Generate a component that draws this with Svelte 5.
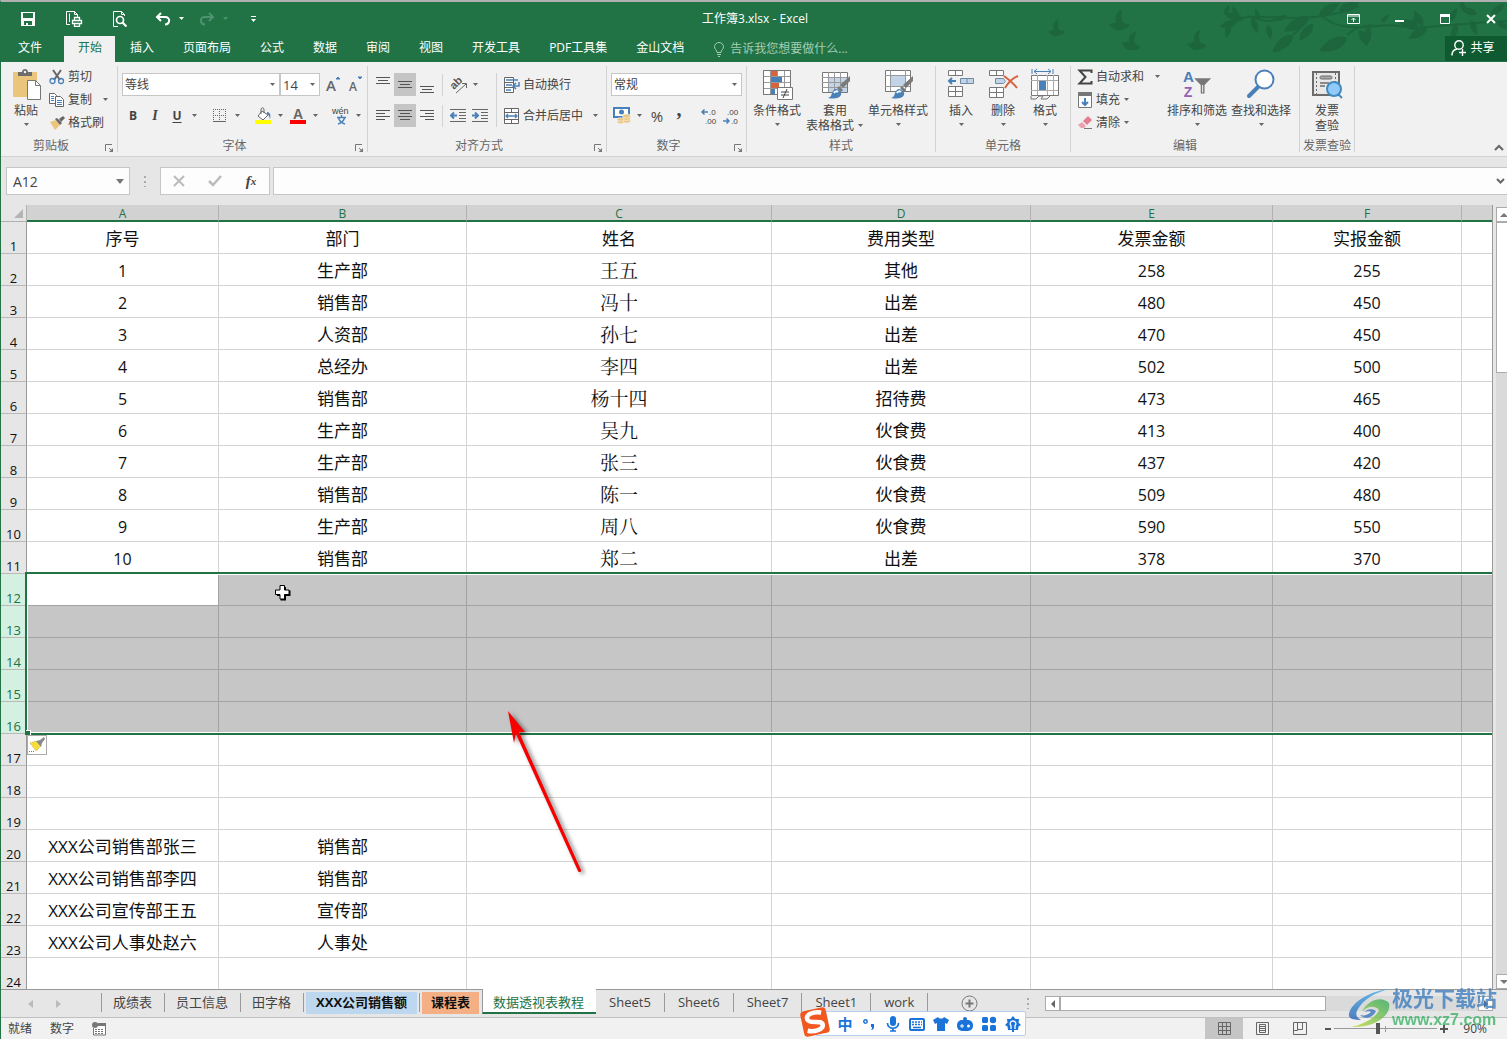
<script lang="ts">
  const tabs = ["插入", "页面布局", "公式", "数据", "审阅", "视图", "开发工具", "PDF工具集", "金山文档"];

  const columns = ["A", "B", "C", "D", "E", "F", ""];

  const data: Record<number, string[]> = {
    1: ["序号", "部门", "姓名", "费用类型", "发票金额", "实报金额"],
    2: ["1", "生产部", "王五", "其他", "258", "255"],
    3: ["2", "销售部", "冯十", "出差", "480", "450"],
    4: ["3", "人资部", "孙七", "出差", "470", "450"],
    5: ["4", "总经办", "李四", "出差", "502", "500"],
    6: ["5", "销售部", "杨十四", "招待费", "473", "465"],
    7: ["6", "生产部", "吴九", "伙食费", "413", "400"],
    8: ["7", "生产部", "张三", "伙食费", "437", "420"],
    9: ["8", "销售部", "陈一", "伙食费", "509", "480"],
    10: ["9", "生产部", "周八", "伙食费", "590", "550"],
    11: ["10", "销售部", "郑二", "出差", "378", "370"],
    20: ["XXX公司销售部张三", "销售部"],
    21: ["XXX公司销售部李四", "销售部"],
    22: ["XXX公司宣传部王五", "宣传部"],
    23: ["XXX公司人事处赵六", "人事处"],
  };
  const rows = Array.from({ length: 24 }, (_, i) => i + 1);

  const sheets = [
    { name: "成绩表" },
    { name: "员工信息" },
    { name: "田字格" },
    { name: "XXX公司销售额", kind: "blue" },
    { name: "课程表", kind: "orange" },
    { name: "数据透视表教程", kind: "active" },
    { name: "Sheet5", kind: "latin" },
    { name: "Sheet6", kind: "latin" },
    { name: "Sheet7", kind: "latin" },
    { name: "Sheet1", kind: "latin" },
    { name: "work", kind: "latin" },
  ];

  let nameBox = $state("A12");
  let formula = $state("");
  let zoom = $state(90);

  const inSelection = (row: number) => row >= 12 && row <= 16;
  const isNumber = (value?: string) => !!value && /^\d+$/.test(value);

  // x, y, rotation, scale
  const leaves = [
    [196, 18, 200, 1.1], [192, 15, 235, 0.7], [190, 20, 165, 1.0], [178, 13, 290, 0.6], [182, 22, 100, 0.8],
    [205, 16, 70, 0.9], [212, 17, 250, 0.6], [221, 23, 80, 0.8], [262, 15, 150, 1.6], [266, 22, 130, 1.2],
    [272, 13, 330, 1.3], [292, 8, 340, 1.2], [240, 14, 160, 0.7], [246, 33, 140, 1.5], [300, 36, 155, 1.7],
    [312, 28, 60, 1.0], [322, 25, 100, 1.1], [334, 20, 320, 0.6], [372, 26, 200, 1.3], [376, 24, 240, 1.0],
    [380, 26, 150, 1.2], [366, 24, 290, 0.7], [402, 20, 300, 0.9], [410, 22, 110, 0.9], [424, 18, 70, 0.9],
    [430, 12, 200, 1.0], [444, 13, 320, 1.0], [450, 20, 30, 0.8], [418, 10, 250, 0.7],
  ];
  const birds = [
    [1, 17, 0, 0.8], [62, 7, 0, 1], [78, 26, 14, 0.95], [141, 27, 4, 0.95],
  ];
</script>

{#snippet caret()}
  <svg class="caret" width="7" height="4" viewBox="0 0 7 4"><path d="M1 0h5L3.5 3z" fill="currentColor" /></svg>
{/snippet}

{#snippet lines(list: number[][])}
  <svg width="16" height="18" viewBox="0 0 16 18" shape-rendering="crispEdges">
    {#each list as [x, y, w]}
      <rect {x} {y} width={w} height="1" fill="#555" />
    {/each}
  </svg>
{/snippet}

{#snippet launcher()}
  <button class="launcher" aria-label="更多选项">
    <svg width="9" height="9" viewBox="0 0 9 9"><path d="M.5 7V.5H7M4 4l3 3" fill="none" stroke="#777" /><path d="M8 4v4H4z" fill="#777" /></svg>
  </button>
{/snippet}

{#snippet brush()}
  <path d="M31 8v5l-7 7-3-3z" fill="#7a7a7a" />
  <path d="M20 18l4 4-2 2-4-4z" fill="#7a7a7a" />
  <path d="M17 21c3 0 6 3 5 6-2 4-8 4-13 3 3-1 3-2 4-5 1-2 2-4 4-4z" fill="#4a80b8" />
  <path d="M15 25c1-2 3-2 4-1" stroke="#fff" stroke-width="2" fill="none" />
{/snippet}

<div class="app">
  <header>
    <svg class="foliage" width="460" height="58" viewBox="0 0 460 58">
      <g fill="#1c653d">
        {#each birds as [x, y, r, s]}
          <path d="M13 0C7 3 5 9 8 13C5 14 2 15 0 16C4 19 7 23 12 21C15 20 21 19 20 15C16 15 14 14 13 12C12 8 12 4 13 0Z" transform="translate({x} {y}) rotate({r}) scale({s})" />
        {/each}
        {#each leaves as [x, y, r, s]}
          <path d="M0 0C4-5 12-4 18 0C12 4 4 5 0 0Z" transform="translate({x} {y}) rotate({r}) scale({s})" />
        {/each}
      </g>
      <path d="M188 18C210 10 240 20 275 14S300 8 312 4M276 15C300 34 330 20 352 24S400 22 460 19M300 33C308 26 316 22 330 24M200 14C215 18 224 22 232 16M262 15C258 22 252 28 246 33" fill="none" stroke="#1c653d" stroke-width="2" />
    </svg>
    <div class="titlebar">
      <div class="qat">
        <button class="wide" aria-label="保存">
          <svg width="14" height="14" viewBox="0 0 14 14"><path d="M0 0h14v14H0zM2 1v5h10V1zM3 9v4h2v-2h2v2h4V9z" fill="#fff" fill-rule="evenodd" /></svg>
        </button>
        <button class="wide" aria-label="快速打印">
          <svg width="17" height="16" viewBox="0 0 17 16" fill="none" stroke="#fff"><path d="M4 13.500H.5v-13h8l3 3V6M3.500 2.500V11M8.500.5v3h3" /><path d="M6.500 12.500v-3h9v3zM8.500 9V6.500h5V9M8.500 12.500v3h5v-3" stroke-width="1.300" /></svg>
        </button>
        <button class="wide" aria-label="打印预览">
          <svg width="14" height="16" viewBox="0 0 14 16" fill="none" stroke="#fff"><path d="M5 15.500H.5V.5h8l3 3V5M8.500.5v3h3" /><circle cx="7" cy="9" r="3.500" stroke-width="1.700" /><path d="M9.500 11.500l4 4" stroke-width="2.200" /></svg>
        </button>
        <button class="undo" aria-label="撤消">
          <svg width="16" height="14" viewBox="0 0 16 14" fill="none" stroke="#fff" stroke-width="2"><path d="M2 5h8c6 0 5 7 0 7.500" /><path d="M6 1L2 5l4 4" /></svg>
        </button>
        <button class="drop" aria-label="撤消列表">{@render caret()}</button>
        <button class="redo dim" aria-label="恢复">
          <svg width="16" height="14" viewBox="0 0 16 14" fill="none" stroke="currentColor" stroke-width="2"><path d="M14 5H6c-6 0-5 7 0 7.500" /><path d="M10 1l4 4-4 4" /></svg>
        </button>
        <button class="drop dim" aria-label="恢复列表">{@render caret()}</button>
        <button class="more" aria-label="自定义快速访问工具栏">
          <svg width="7" height="7" viewBox="0 0 7 7"><path d="M1 0h5v1H1zM1 3h5L3.500 6z" fill="#fff" /></svg>
        </button>
      </div>
      <h1>工作簿3.xlsx - Excel</h1>
      <div class="window-controls">
        <button aria-label="功能区显示选项">
          <svg width="13" height="10" viewBox="0 0 13 10" fill="none" stroke="#fff"><path d="M.5.5h12v9H.5zM1 2h11M6.500 8V4M4.500 6l2-2 2 2" /></svg>
        </button>
        <button aria-label="最小化"><svg width="10" height="10" viewBox="0 0 10 10"><path d="M1 6h9v2H1z" fill="#fff" /></svg></button>
        <button aria-label="最大化"><svg width="10" height="10" viewBox="0 0 10 10"><path d="M.5 1.500h9v8h-9z" fill="none" stroke="#fff" /><path d="M0 0h10v3H0z" fill="#fff" /></svg></button>
        <button aria-label="关闭"><svg width="10" height="10" viewBox="0 0 10 10"><path d="M1 1l8 8M9 1L1 9" stroke="#fff" stroke-width="2" /></svg></button>
      </div>
    </div>
    <nav class="tabs">
      <button class="tab file">文件</button>
      <button class="tab current">开始</button>
      {#each tabs as tab}
        <button class="tab">{tab}</button>
      {/each}
      <button class="tell-me">
        <svg width="12" height="15" viewBox="0 0 12 15" fill="none" stroke="#a3cdb3"><path d="M4 10.500C4 8 1.500 7.500 1.500 4.800A4.500 4.300 0 0 1 10.500 4.800C10.500 7.500 8 8 8 10.500zM4 12.500h4M5 14.500h2" /></svg>
        告诉我您想要做什么...
      </button>
      <button class="share">
        <svg width="16" height="16" viewBox="0 0 16 16" fill="none" stroke="#fff" stroke-width="1.400"><circle cx="8" cy="5" r="4.200" /><path d="M1 15.500c0-4 2-6 5-6.500M8 12.500h7M11.500 9v7" /></svg>
        共享
      </button>
    </nav>
  </header>

  <section class="ribbon">
    <div class="group clipboard">
      <div class="body">
        <button class="big">
          <svg width="32" height="32" viewBox="0 0 32 32"><path d="M3 4h24v25H3z" fill="#ecc57c" /><path d="M8 8V4h4c0-4 6-4 6 0h4v4z" fill="#6d6d6d" /><circle cx="15" cy="4" r="1.200" fill="#f1f1f1" /><path d="M17.500 12.500h8l5 5v14h-13z" fill="#fff" stroke="#777" /><path d="M25.500 12.500v5h5" fill="none" stroke="#777" /></svg>
          <span>粘贴</span>
          {@render caret()}
        </button>
        <div class="stack">
          <button class="small">
            <svg width="16" height="16" viewBox="0 0 16 16" fill="none"><path d="M4 1l7 10M12 1L5 11" stroke="#666" stroke-width="2" /><circle cx="3.500" cy="12" r="2.500" stroke="#4a80b8" stroke-width="1.300" /><circle cx="12" cy="12" r="2.500" stroke="#4a80b8" stroke-width="1.300" /></svg>
            剪切
          </button>
          <button class="small">
            <svg width="16" height="16" viewBox="0 0 16 16"><path d="M.5 1.500h5l2 2v8h-7z" fill="#fff" stroke="#666" /><path d="M6.500 4.500h5l3 3v7h-8z" fill="#fff" stroke="#666" /><path d="M2 4.500h3M2 6.500h3M2 8.500h3M8 8.500h5M8 10.500h5M8 12.500h5" stroke="#4a80b8" /></svg>
            复制
            <span class="push">{@render caret()}</span>
          </button>
          <button class="small">
            <svg width="16" height="16" viewBox="0 0 16 16"><path d="M1 7l6-2 4 5-5 5z" fill="#ecc57c" /><path d="M6 4l5 6 2-2-5-5z" fill="#666" /><path d="M10 4l4-3 2 2-4 4z" fill="#666" /></svg>
            格式刷
          </button>
        </div>
      </div>
      <div class="caption"><span>剪贴板</span>{@render launcher()}</div>
    </div>

    <div class="group font">
      <div class="body rows">
        <div class="row">
          <span class="combo family">
            <select aria-label="字体"><option>等线</option></select>
            {@render caret()}
          </span>
          <span class="combo size">
            <select aria-label="字号"><option>14</option></select>
            {@render caret()}
          </span>
          <button class="tool w24" aria-label="增大字号"><svg width="18" height="20" viewBox="0 0 18 20"><text x="2" y="16" font-size="15" font-weight="600" fill="#666">A</text><path d="M12 4l2-2 2 2z" fill="#4a80b8" stroke="#4a80b8" /></svg></button>
          <button class="tool" aria-label="减小字号"><svg width="18" height="20" viewBox="0 0 18 20"><text x="2" y="16" font-size="12" font-weight="600" fill="#666">A</text><path d="M11 2l2 2 2-2z" fill="#4a80b8" stroke="#4a80b8" /></svg></button>
        </div>
        <div class="row">
          <button class="tool bold">B</button>
          <button class="tool italic">I</button>
          <button class="tool under">U</button>
          <button class="arrow" aria-label="下划线样式">{@render caret()}</button>
          <i class="sep"></i>
          <button class="tool" aria-label="边框"><svg width="14" height="14" viewBox="0 0 14 14" fill="none" stroke="#666"><path d="M0 .5h13M0 6.500h13M.5 0v13M6.500 0v13M12.500 0v13" stroke-dasharray="1 1" /><path d="M0 12.500h13" /></svg></button>
          <button class="arrow" aria-label="边框样式">{@render caret()}</button>
          <i class="sep"></i>
          <button class="tool" aria-label="填充颜色"><svg width="16" height="18" viewBox="0 0 16 18"><path d="M7 4l6 4-5 5-5-4z" fill="#fff" stroke="#666" /><path d="M6 7V3c0-3 3-3 3 0v3" fill="none" stroke="#666" /><path d="M12 5c3 0 4 3 3 7-1-3-1-4-3-5z" fill="#4a80b8" /><path d="M0 13h16v4H0z" fill="#ff0" /></svg></button>
          <button class="arrow" aria-label="更多填充颜色">{@render caret()}</button>
          <button class="tool" aria-label="字体颜色"><svg width="16" height="22" viewBox="0 -2 16 22"><text class="glyph" x="3" y="12" font-size="14" font-weight="700" fill="#666">A</text><path d="M0 13h16v4H0z" fill="red" /></svg></button>
          <button class="arrow" aria-label="更多字体颜色">{@render caret()}</button>
          <i class="sep"></i>
          <button class="tool" aria-label="拼音指南"><svg width="20" height="22" viewBox="0 0 20 22"><text class="glyph" x="1" y="9" font-size="9" fill="#444">wén</text><path d="M6 12.500h9M10.500 10v2M7.500 13c1 3 3 5 6.500 6M13.500 13c-1 3-3 5-6.500 6" fill="none" stroke="#4a80b8" stroke-width="1.500" /></svg></button>
          <button class="arrow" aria-label="拼音选项">{@render caret()}</button>
        </div>
      </div>
      <div class="caption"><span>字体</span>{@render launcher()}</div>
    </div>

    <div class="group align">
      <div class="body">
        <div class="rows">
          <div class="row">
            <button class="tool" aria-label="顶端对齐">{@render lines([[1, 1, 14], [3, 4, 10], [1, 7, 14]])}</button>
            <button class="tool on" aria-label="垂直居中">{@render lines([[1, 5, 14], [3, 8, 10], [1, 11, 14]])}</button>
            <button class="tool" aria-label="底端对齐">{@render lines([[1, 10, 14], [3, 13, 10], [1, 16, 14]])}</button>
            <i class="sep tight"></i>
            <button class="tool" aria-label="方向"><svg width="20" height="20" viewBox="0 0 20 20"><text class="glyph" font-size="11" font-weight="700" fill="#555" transform="translate(6 15) rotate(-45)">ab</text><path d="M8 18L18 9M14 8.500h4.500V13" fill="none" stroke="#666" /></svg></button>
            <button class="arrow" aria-label="方向选项">{@render caret()}</button>
          </div>
          <div class="row">
            <button class="tool" aria-label="左对齐">{@render lines([[1, 3, 14], [1, 6, 9], [1, 9, 14], [1, 12, 9]])}</button>
            <button class="tool on" aria-label="居中">{@render lines([[1, 3, 14], [3, 6, 10], [1, 9, 14], [3, 12, 10]])}</button>
            <button class="tool" aria-label="右对齐">{@render lines([[1, 3, 14], [6, 6, 9], [1, 9, 14], [6, 12, 9]])}</button>
            <i class="sep tight"></i>
            <button class="tool" aria-label="减少缩进量"><svg width="16" height="14" viewBox="0 0 16 14"><path d="M0 .5h16M9 3.500h7M9 6.500h7M9 9.500h7M0 12.500h16" stroke="#666" /><path d="M1 6.500h6M4 3.500l-3 3 3 3" fill="none" stroke="#4a80b8" stroke-width="2" /></svg></button>
            <button class="tool" aria-label="增加缩进量"><svg width="16" height="14" viewBox="0 0 16 14"><path d="M0 .5h16M9 3.500h7M9 6.500h7M9 9.500h7M0 12.500h16" stroke="#666" /><path d="M0 6.500h6M3 3.500l3 3-3 3" fill="none" stroke="#4a80b8" stroke-width="2" /></svg></button>
          </div>
        </div>
        <i class="sep tall"></i>
        <div class="rows">
          <div class="row">
            <button class="small">
              <svg width="16" height="16" viewBox="0 0 16 16"><path d="M.5.500h9v15h-9z" fill="#fff" stroke="#666" /><path d="M0 5.500h10M0 10.500h9" stroke="#666" /><path d="M2 3h12M2 8h6M2 13h5" stroke="#4a80b8" stroke-width="1.500" /><path d="M15 5v4h-5M12 6l-3 3 3 3" fill="none" stroke="#4a80b8" stroke-width="1.500" /></svg>
              自动换行
            </button>
          </div>
          <div class="row">
            <button class="small">
              <svg width="16" height="16" viewBox="0 0 16 16"><path d="M.5.500h14v15H.5z" fill="#fff" stroke="#666" /><path d="M0 4.500h15M0 11.500h15M7.500 0v4M7.500 12v4" stroke="#666" /><path d="M2 8h11M4 6L2 8l2 2M11 6l2 2-2 2" fill="none" stroke="#4a80b8" stroke-width="1.300" /></svg>
              合并后居中
            </button>
            <button class="arrow far" aria-label="合并选项">{@render caret()}</button>
          </div>
        </div>
      </div>
      <div class="caption"><span>对齐方式</span>{@render launcher()}</div>
    </div>

    <div class="group number">
      <div class="body rows">
        <div class="row">
          <span class="combo format">
            <select aria-label="数字格式"><option>常规</option></select>
            {@render caret()}
          </span>
        </div>
        <div class="row">
          <button class="tool" aria-label="会计数字格式"><svg width="18" height="17" viewBox="0 0 18 17"><path d="M1 1h15v9H1z" fill="#fff" stroke="#4a80b8" stroke-width="2" /><circle cx="8.500" cy="5" r="2.500" fill="#4a80b8" /><g fill="#ecc57c" stroke="#f1f1f1" stroke-width=".7"><ellipse cx="13.500" cy="14" rx="4" ry="2" /><ellipse cx="13.500" cy="11.500" rx="4" ry="2" /><ellipse cx="13.500" cy="9" rx="4" ry="2" /><ellipse cx="7.500" cy="15" rx="3.500" ry="1.700" /><ellipse cx="7.500" cy="12.500" rx="3.500" ry="1.700" /></g></svg></button>
          <button class="arrow" aria-label="货币选项">{@render caret()}</button>
          <button class="tool percent">%</button>
          <button class="tool comma">,</button>
          <i class="sep"></i>
          <button class="tool" aria-label="增加小数位数"><svg width="18" height="20" viewBox="0 0 18 20"><text class="glyph" x="9" y="9" font-size="8" fill="#444">.0</text><text class="glyph" x="5" y="18" font-size="8" fill="#444">.00</text><path d="M2 6h6M4.500 3.500L2 6l2.500 2.500" fill="none" stroke="#4a80b8" stroke-width="1.500" /></svg></button>
          <button class="tool" aria-label="减少小数位数"><svg width="18" height="20" viewBox="0 0 18 20"><text class="glyph" x="5" y="9" font-size="8" fill="#444">.00</text><text class="glyph" x="9" y="18" font-size="8" fill="#444">.0</text><path d="M1 15h6M4.500 12.500L7 15l-2.500 2.500" fill="none" stroke="#4a80b8" stroke-width="1.500" /></svg></button>
        </div>
      </div>
      <div class="caption"><span>数字</span>{@render launcher()}</div>
    </div>

    <div class="group styles">
      <div class="body">
        <button class="big">
          <svg width="32" height="32" viewBox="0 0 32 32"><path d="M2.500 2.500h27v24h-27z" fill="#fff" /><path d="M2.500 2.500h27v24h-27zM2 8.500h27M2 14.500h27M2 20.500h27M9.500 2v24M16.500 2v24M23.500 2v24" fill="none" stroke="#999" /><path d="M10 3h6v5h-6zM10 15h8v5h-8z" fill="#d9633c" /><path d="M10 9h11v5H10zM10 21h4v5h-4z" fill="#4a80b8" /><path d="M2.500 2.500h27v24h-27z" fill="none" stroke="#777" /><path d="M16.500 19.500h15v12h-15z" fill="#fff" stroke="#777" /><path d="M20 24h8M20 27h8M26 21l-4 9" stroke="#444" /></svg>
          <span>条件格式</span>
          {@render caret()}
        </button>
        <button class="big w62">
          <svg width="32" height="32" viewBox="0 0 32 32"><path d="M3.500 4.500h25v20h-25z" fill="#fff" stroke="#777" /><path d="M10 10h18v14H10z" fill="#c2d4e8" /><path d="M3 9.500h25M3 14.500h25M3 19.500h25M9.500 4v20M15.500 4v20M21.500 4v20" stroke="#999" />{@render brush()}</svg>
          <span>套用</span>
          <span class="inline">表格格式 {@render caret()}</span>
        </button>
        <button class="big w64">
          <svg width="32" height="32" viewBox="0 0 32 32"><path d="M3.500 2.500h25v21h-25z" fill="#fff" stroke="#777" /><path d="M3 7.500h25M3 18.500h25M8.500 2v21M23.500 2v21" stroke="#999" /><path d="M9 8h14v10H9z" fill="#c2d4e8" />{@render brush()}</svg>
          <span>单元格样式</span>
          {@render caret()}
        </button>
      </div>
      <div class="caption"><span>样式</span></div>
    </div>

    <div class="group cells">
      <div class="body">
        <button class="big w42">
          <svg width="32" height="32" viewBox="0 0 32 32"><path d="M3.500 2.500h14v5h-14zM3.500 18.500h14v10h-14z" fill="#fff" stroke="#777" /><path d="M10.500 2v5M10.500 18v10M3 23.500h14" stroke="#777" /><path d="M15.500 10.500h13v5h-13zM22 10v5" fill="#c2d4e8" stroke="#6f8aa5" /><path d="M4 13h7M7 10l-3 3 3 3" fill="none" stroke="#4a80b8" stroke-width="2" /></svg>
          <span>插入</span>
          {@render caret()}
        </button>
        <button class="big w42">
          <svg width="32" height="32" viewBox="0 0 32 32"><path d="M2.500 2.500h14v5h-14zM2.500 19.500h14v10h-14z" fill="#fff" stroke="#777" /><path d="M9.500 2v5M9.500 19v10M2 24.500h14" stroke="#777" /><path d="M8.500 10.500h8l2 3-2 2h-8z" fill="#c2d4e8" stroke="#6f8aa5" /><path d="M17 8c4 3 10 8 13 12M31 8c-5 2-10 7-13 12" fill="none" stroke="#d9633c" stroke-width="2" /></svg>
          <span>删除</span>
          {@render caret()}
        </button>
        <button class="big w42">
          <svg width="32" height="32" viewBox="0 0 32 32"><path d="M2.500 7.500h27v20h-27z" fill="#fff" stroke="#777" /><path d="M2 12.500h27M2 22.500h27M8.500 7v20M18.500 7v20M24.500 7v20" stroke="#aaa" /><path d="M10 13h7v9h-7z" fill="#4a80b8" /><path d="M3 1v5M24 1v5M5 3.500h17M8 1L5 3.500 8 6M19 1l3 2.500L19 6" fill="none" stroke="#4a80b8" /><path d="M2 28v3h5l3-3h4l-2 3h6l3-3" fill="none" stroke="#777" /></svg>
          <span>格式</span>
          {@render caret()}
        </button>
      </div>
      <div class="caption"><span>单元格</span></div>
    </div>

    <div class="group edit">
      <div class="body">
        <div class="stack">
          <button class="small">
            <svg width="16" height="16" viewBox="0 0 16 16"><path d="M14.500 4V1.500H2.500L8.500 8l-6 6.500h12V12" fill="none" stroke="#444" stroke-width="2" /></svg>
            自动求和
            <span class="push">{@render caret()}</span>
          </button>
          <button class="small">
            <svg width="16" height="16" viewBox="0 0 16 16"><path d="M1.500 1.500h13v14h-13z" fill="#fff" stroke="#777" /><path d="M1 0h14v4H1z" fill="#777" /><path d="M8 6v7M5 10l3 3 3-3" fill="none" stroke="#4a80b8" stroke-width="2" /></svg>
            填充 {@render caret()}
          </button>
          <button class="small">
            <svg width="16" height="16" viewBox="0 0 16 16"><path d="M6 6l5-5 4 4-5 5z" fill="#e47f92" /><path d="M5 7l4 4-2 2H4L1 10z" fill="#eda0ae" /><path d="M7 13.500h8" stroke="#777" /></svg>
            清除 {@render caret()}
          </button>
        </div>
        <button class="big w64">
          <svg width="32" height="34" viewBox="0 -2 32 34"><text class="glyph" x="1" y="13" font-size="16" font-weight="700" fill="#4a80b8">A</text><text class="glyph" x="2" y="29" font-size="15" font-weight="700" fill="#9461b5">Z</text><path d="M13 9h18l-7 7v9h-4v-9z" fill="#777" /><path d="M22 16v8" stroke="#fff" /></svg>
          <span>排序和筛选</span>
          {@render caret()}
        </button>
        <button class="big w64">
          <svg width="32" height="32" viewBox="0 0 32 32"><path d="M14 18L4 28" stroke="#4a80b8" stroke-width="4" stroke-linecap="round" /><circle cx="19.500" cy="11.500" r="9" fill="#fff" stroke="#4a80b8" stroke-width="2" /></svg>
          <span>查找和选择</span>
          {@render caret()}
        </button>
      </div>
      <div class="caption"><span>编辑</span></div>
    </div>

    <div class="group invoice">
      <div class="body">
        <button class="big">
          <svg width="32" height="32" viewBox="0 0 32 32"><path d="M2 4h26v23H2z" fill="#e8e8e8" stroke="#6b6b6b" stroke-width="2" /><path d="M5.500 5v21M24.500 5v21" stroke="#6b6b6b" stroke-dasharray="2 2" /><rect x="9" y="8" width="12" height="3" rx="1.500" fill="#aaa" stroke="#6b6b6b" /><path d="M9 15h9M9 18h5" stroke="#6b6b6b" stroke-width="1.500" /><circle cx="23" cy="21" r="7" fill="#90caf9" stroke="#3f8abf" stroke-width="2" /><path d="M27 26l4 4" stroke="#3f8abf" stroke-width="2" /></svg>
          <span>发票</span>
          <span>查验</span>
        </button>
      </div>
      <div class="caption"><span>发票查验</span></div>
    </div>

    <button class="collapse" aria-label="折叠功能区">
      <svg width="10" height="7" viewBox="0 0 10 7"><path d="M1 6l4-4 4 4" fill="none" stroke="#666" stroke-width="2" /></svg>
    </button>
  </section>

  <section class="formula-bar">
    <label class="name-box">
      <input aria-label="名称框" bind:value={nameBox} />
      <svg width="8" height="5" viewBox="0 0 8 5"><path d="M0 0h8L4 5z" fill="#777" /></svg>
    </label>
    <span class="dots"></span>
    <div class="fx">
      <button aria-label="取消"><svg width="12" height="12" viewBox="0 0 12 12"><path d="M1 1l10 10M11 1L1 11" stroke="#bbb" stroke-width="2" /></svg></button>
      <button aria-label="输入"><svg width="14" height="12" viewBox="0 0 14 12"><path d="M1 6l4 4 8-9" fill="none" stroke="#bbb" stroke-width="2.500" /></svg></button>
      <button class="fn">f<sub>x</sub></button>
    </div>
    <label class="formula">
      <input aria-label="编辑栏" bind:value={formula} />
      <svg width="9" height="6" viewBox="0 0 9 6"><path d="M1 1l3.500 3.500L8 1" fill="none" stroke="#666" stroke-width="2" /></svg>
    </label>
  </section>

  <main>
    <div class="sheet">
      <table>
        <colgroup>
          <col class="c-head" /><col class="c-a" /><col class="c-b" /><col class="c-c" /><col class="c-d" /><col class="c-e" /><col class="c-f" /><col />
        </colgroup>
        <thead>
          <tr>
            <td class="corner"><svg width="9" height="9" viewBox="0 0 9 9"><path d="M9 0v9H0z" fill="#b4b4b4" /></svg></td>
            {#each columns as col}
              <th scope="col">{col}</th>
            {/each}
          </tr>
        </thead>
        <tbody>
          {#each rows as row}
            <tr class:selected={inSelection(row)}>
              <th scope="row">{row}</th>
              {#each columns as _, i}
                <td
                  class:active={row === 12 && i === 0}
                  class:name={i === 2 && row > 1}
                  class:num={isNumber(data[row]?.[i])}
                >{data[row]?.[i] ?? ""}</td>
              {/each}
            </tr>
          {/each}
        </tbody>
      </table>
      <div class="selection"><span class="handle"></span></div>
      <button class="paste-options" aria-label="粘贴选项">
        <svg width="18" height="18" viewBox="0 0 18 18"><path d="M2 7l6-2 5 5-5 5z" fill="#f7dc3c" stroke="#c9b458" stroke-dasharray="1 1" /><path d="M8 5l4-1 4-3 1 2-3 4-1 4z" fill="#8a8a8a" /><path d="M1 15.500h6" stroke="#777" stroke-dasharray="1 1" /></svg>
      </button>
      <svg class="pointer" width="16" height="16" viewBox="0 0 16 16"><path d="M5.500 2v4H2v5h3.500v4.500h5.500V11h4.500V5.500H11V2z" fill="#000" /><path d="M5 .5h4.500V5H14v4.500H9.500V14H5V9.500H.5V5H5z" fill="#fff" stroke="#000" /></svg>
      <svg class="pointing-arrow" width="100" height="180" viewBox="0 0 100 180">
        <path d="M8 6L25 27l-6 0L81 165a1.500 1.500 0 0 1-3 1L16 29l-2 9z" fill="#f80000" />
      </svg>
    </div>
    <div class="vscroll">
      <button aria-label="向上滚动"><svg width="8" height="4" viewBox="0 0 8 4"><path d="M4 0l4 4H0z" fill="#777" /></svg></button>
      <div class="thumb"></div>
      <button class="end" aria-label="向下滚动"><svg width="8" height="4" viewBox="0 0 8 4"><path d="M0 0h8L4 4z" fill="#777" /></svg></button>
    </div>
  </main>

  <nav class="sheet-tabs">
    <div class="arrows">
      <button aria-label="上一个工作表"><svg width="5" height="8" viewBox="0 0 5 8"><path d="M5 0v8L0 4z" fill="#bbb" /></svg></button>
      <button aria-label="下一个工作表"><svg width="5" height="8" viewBox="0 0 5 8"><path d="M0 0v8l5-4z" fill="#bbb" /></svg></button>
    </div>
    <ul>
      {#each sheets as sheet}
        <li class={sheet.kind}><button>{sheet.name}</button></li>
      {/each}
    </ul>
    <button class="add" aria-label="新工作表"><svg width="17" height="17" viewBox="0 0 17 17" fill="none" stroke="#777"><circle cx="8.500" cy="8.500" r="7.500" /><path d="M4.500 8.500h8M8.500 4.500v8" stroke-width="2" /></svg></button>
    <span class="dots"></span>
    <div class="hscroll">
      <button aria-label="向左滚动"><svg width="4" height="8" viewBox="0 0 4 8"><path d="M4 0v8L0 4z" fill="#666" /></svg></button>
      <div class="thumb"></div>
      <button class="end" aria-label="向右滚动"><svg width="4" height="8" viewBox="0 0 4 8"><path d="M0 0v8l4-4z" fill="#666" /></svg></button>
    </div>
  </nav>

  <footer>
    <span>就绪</span>
    <span>数字</span>
    <svg width="14" height="14" viewBox="0 0 14 14"><path d="M4 2h9.500v11h-12V6" fill="#fff" stroke="#777" /><path d="M6 1h8v3H6z" fill="#777" /><circle cx="3" cy="3" r="3" fill="#777" /><path d="M3 7.500h9M3 9.500h9M3 11.500h9" stroke="#777" stroke-dasharray="2 1" /></svg>
    <div class="views">
      <button class="on" aria-label="普通"><svg width="13" height="13" viewBox="0 0 13 13" fill="none" stroke="#666"><path d="M.5.500h12v12H.5zM0 4.500h13M0 8.500h13M4.500 0v13M8.500 0v13" /></svg></button>
      <button aria-label="页面布局"><svg width="13" height="13" viewBox="0 0 13 13" fill="none" stroke="#666"><path d="M.5.500h12v12H.5zM3.500 2.500h6v8h-6zM4 4.500h5M4 6.500h5M4 8.500h5" /></svg></button>
      <button aria-label="分页预览"><svg width="14" height="13" viewBox="0 0 14 13" fill="none" stroke="#666"><path d="M.5.500h13v12H.5zM.5 8.500h4M4.500 0v8.500M4.500 7.500h5V0" /></svg></button>
    </div>
    <div class="zoom">
      <button aria-label="缩小"><svg width="6" height="2" viewBox="0 0 6 2"><path d="M0 0h6v2H0z" fill="#555" /></svg></button>
      <input type="range" min="10" max="200" aria-label="显示比例" bind:value={zoom} />
      <button aria-label="放大"><svg width="8" height="8" viewBox="0 0 8 8"><path d="M0 3h8v2H0zM3 0h2v8H3z" fill="#555" /></svg></button>
      <button class="level">{zoom}%</button>
    </div>
  </footer>

  <div class="ime">
    <svg class="sogou" width="32" height="32" viewBox="0 0 32 32"><g transform="rotate(-12 16 16)"><rect x="3" y="3" width="26" height="26" rx="4" fill="#f1571f" /><path d="M24 8C16 5 8 7 9 12s14 3 14 8-10 6-16 3" fill="none" stroke="#fff" stroke-width="4.500" /></g></svg>
    <button class="zh">中</button>
    <button aria-label="中文标点"><svg width="16" height="16" viewBox="0 0 16 16"><circle cx="4.500" cy="5.500" r="1.700" fill="none" stroke="#1a73d9" stroke-width="1.500" /><path d="M10 8h3v3c0 2-1 3-3 3 1-1 1-2 1-3h-1z" fill="#1a73d9" /></svg></button>
    <button aria-label="语音"><svg width="16" height="16" viewBox="0 0 16 16"><rect x="5" y="0" width="6" height="10" rx="3" fill="#1a73d9" /><path d="M2.500 7c0 7 11 7 11 0M8 12v3M5 15h6" fill="none" stroke="#1a73d9" stroke-width="1.700" /></svg></button>
    <button aria-label="软键盘"><svg width="16" height="16" viewBox="0 0 16 16"><rect x="1" y="3" width="14" height="11" rx="1" fill="none" stroke="#1a73d9" stroke-width="2" /><path d="M3 6h10M3 8.500h10" stroke="#1a73d9" stroke-width="1.500" stroke-dasharray="2 1" /><path d="M4 11.500h8" stroke="#1a73d9" stroke-width="1.500" /></svg></button>
    <button aria-label="皮肤"><svg width="16" height="16" viewBox="0 0 16 16"><path d="M5 1c1 2 5 2 6 0l5 3-2 4-2-1v8H4V7L2 8 0 4z" fill="#1a73d9" /></svg></button>
    <button aria-label="游戏"><svg width="16" height="16" viewBox="0 0 16 16"><rect x="0" y="4" width="16" height="11" rx="5" fill="#1a73d9" /><circle cx="8" cy="3" r="2" fill="#1a73d9" /><path d="M3 10h4M5 8v4" stroke="#fff" /><circle cx="11.500" cy="10" r="1.500" fill="#fff" /></svg></button>
    <button aria-label="工具箱"><svg width="16" height="16" viewBox="0 0 16 16" fill="#1a73d9"><rect x="1" y="1" width="6" height="6" rx="1.500" /><circle cx="12" cy="4" r="3.200" /><rect x="1" y="9" width="6" height="6" rx="1.500" /><rect x="9" y="9" width="6" height="6" rx="1.500" /></svg></button>
    <button aria-label="设置"><svg width="16" height="16" viewBox="0 0 16 16"><path d="M8 0l2.500 3L14 3l-.5 3.500L16 9l-2.500 1.500L13 14H9v2H7v-2H3l-.5-3.500L0 9l2.500-2.500L2 3l3.500 0z" fill="#1a73d9" /><path d="M6 13V9.500C4 8 5.500 5 8 5s4 3 2 4.500V13" fill="none" stroke="#fff" stroke-width="1.300" /></svg></button>
  </div>

  <div class="watermark">
    <svg width="44" height="42" viewBox="0 0 44 42">
      <defs>
        <linearGradient id="swoosh" x1="0" y1="0" x2="0" y2="1"><stop offset="0" stop-color="#45aee8" /><stop offset="1" stop-color="#2a63b5" /></linearGradient>
        <linearGradient id="tail" x1="1" y1="0" x2="0" y2="1"><stop offset="0" stop-color="#35ae62" /><stop offset="1" stop-color="#c5d83a" /></linearGradient>
      </defs>
      <path d="M42 1C24 2 3 14 1 26c-1 5 5 6 12 6-5-3-6-6-3-11C15 12 27 4 42 1z" fill="url(#swoosh)" />
      <path d="M41 15c3 12-14 25-38 24 10-2 24-8 28-17-4-5-12-4-17 2 3-9 18-18 27-9z" fill="url(#tail)" />
      <path d="M12 27c5 5 13 3 16-4-4-3-9-2-12 1 3-1 6-1 7 0-3 3-7 4-11 3z" fill="#3a76bf" />
    </svg>
    <div>
      <strong>极光下载站</strong>
      <em>www.xz7.com</em>
    </div>
  </div>
</div>

<style>
  :global(body) {
    overflow: hidden;
  }
  .app {
    position: relative;
    display: flex;
    flex-direction: column;
    box-sizing: border-box;
    height: 100vh;
    overflow: hidden;
    border-top: 2px solid #b1b1b1;
    border-left: 1px solid #217346;
    background: #e6e6e6;
    color: #444;
    font: 12px/16px "Open Sans", "Noto Sans CJK SC", sans-serif;
  }
  button,
  input,
  select {
    box-sizing: border-box;
    margin: 0;
    padding: 0;
    border: 0;
    border-radius: 0;
    background: none;
    color: inherit;
    font: inherit;
  }
  button {
    display: flex;
    align-items: center;
    justify-content: center;
    flex: none;
    white-space: nowrap;
  }
  svg {
    display: block;
    flex: none;
  }
  .glyph {
    font-family: "Liberation Sans", sans-serif;
  }

  /* title bar and ribbon tabs */
  header {
    position: relative;
    flex: none;
    background: #217346;
    color: #fff;
  }
  .foliage {
    position: absolute;
    top: 0;
    right: 0;
  }
  .titlebar {
    position: relative;
    display: grid;
    grid-template-columns: 1fr auto 1fr;
    align-items: center;
    height: 34px;
  }
  h1 {
    margin: 0;
    padding-left: 2px;
    font: inherit;
  }
  .qat {
    display: flex;
    align-items: center;
    padding-left: 4px;
  }
  .qat .wide {
    width: 46px;
  }
  .qat .undo {
    margin-left: 12px;
  }
  .qat .redo {
    margin-left: 8px;
  }
  .qat .drop {
    width: 20px;
  }
  .qat .more {
    width: 36px;
  }
  .dim {
    color: #4f9270;
  }
  .window-controls {
    display: flex;
    justify-content: flex-end;
    gap: 34px;
    padding-right: 10px;
  }
  .window-controls button {
    width: 12px;
  }
  .tabs {
    position: relative;
    display: flex;
    height: 26px;
  }
  .tab {
    margin-right: 1px;
    padding: 0 14px 2px;
  }
  .file {
    width: 62px;
    padding: 0 4px 2px 0;
  }
  .current {
    padding: 0 13px 2px 14px;
    background: #f1f1f1;
    color: #217346;
  }
  .tell-me {
    gap: 5px;
    padding-left: 14px;
    color: #a3cdb3;
  }
  .share {
    gap: 3px;
    width: 62px;
    height: 25px;
    margin-left: auto;
    padding: 0 6px 2px 0;
    background: #0f5a30;
  }

  /* ribbon */
  .ribbon {
    display: flex;
    flex: none;
    height: 94px;
    border-bottom: 1px solid #d2d2d2;
    background: #f1f1f1;
  }
  .group {
    display: flex;
    flex: none;
    flex-direction: column;
    box-sizing: border-box;
    height: 86px;
    margin-top: 4px;
    border-right: 1px solid #d2d2d2;
  }
  .clipboard {
    width: 117px;
  }
  .font {
    width: 250px;
  }
  .align {
    width: 239px;
  }
  .number {
    width: 140px;
  }
  .styles {
    width: 189px;
  }
  .cells {
    width: 135px;
  }
  .edit {
    width: 229px;
  }
  .invoice {
    width: 55px;
  }
  .body {
    display: flex;
    flex: 1;
    padding: 0 4px;
  }
  .styles .body {
    padding: 0 3px;
  }
  .edit .body {
    padding: 0 5px 0 6px;
  }
  .caption {
    display: flex;
    height: 16px;
    color: #666;
    line-height: 20px;
  }
  .caption span {
    flex: 1;
    text-align: center;
    white-space: nowrap;
  }
  .launcher {
    width: 16px;
    padding-top: 8px;
  }
  .caret {
    color: #666;
  }
  .qat .caret {
    color: inherit;
  }
  .big {
    flex-direction: column;
    justify-content: flex-start;
    width: 54px;
    padding-top: 2px;
    line-height: 15px;
  }
  .clipboard .big {
    width: 42px;
  }
  .invoice .big {
    width: 46px;
  }
  .big > svg:first-child {
    height: 32px;
    margin-bottom: 3px;
  }
  .big > :global(.caret) {
    margin-top: 5px;
  }
  .inline {
    display: flex;
    align-items: center;
    gap: 3px;
  }
  .w62 {
    width: 62px;
  }
  .w64 {
    width: 64px;
  }
  .w42 {
    width: 42px;
  }
  .stack {
    display: flex;
    flex-direction: column;
  }
  .clipboard .stack {
    width: 68px;
    padding-left: 2px;
  }
  .edit .stack {
    width: 88px;
  }
  .small {
    justify-content: flex-start;
    gap: 3px;
    height: 23px;
    padding-bottom: 2px;
  }
  .row .small {
    padding: 0;
  }
  .push {
    margin-left: auto;
    margin-right: 4px;
  }
  .rows {
    display: flex;
    flex-direction: column;
    gap: 8px;
    padding-top: 7px;
  }
  .row {
    display: flex;
    align-items: center;
    height: 23px;
  }
  .tool {
    width: 22px;
    height: 23px;
  }
  .w24 {
    width: 24px;
  }
  .on {
    background: #c5c5c5;
  }
  .arrow {
    width: 13px;
    height: 23px;
  }
  .sep {
    width: 1px;
    height: 22px;
    margin: 0 4px;
    background: #d2d2d2;
  }
  .sep.tall {
    height: 54px;
    margin: 7px 7px 0 5px;
  }
  .bold {
    font-weight: 700;
  }
  .italic {
    font: italic 700 14px "Liberation Serif", serif;
  }
  .under {
    font-weight: 700;
    text-decoration: underline;
    text-underline-offset: 2px;
  }
  .percent {
    font-size: 15px;
  }
  .comma {
    padding-bottom: 12px;
    font: 700 20px "Liberation Serif", serif;
  }
  .far {
    margin-left: 6px;
  }
  .combo {
    display: grid;
    flex: none;
    align-items: center;
  }
  .combo > select,
  .combo > :global(svg) {
    grid-area: 1 / 1;
  }
  .combo > :global(svg) {
    justify-self: end;
    margin-right: 4px;
    pointer-events: none;
  }
  select {
    width: 100%;
    height: 23px;
    padding: 0 2px;
    border: 1px solid #c6c6c6;
    background: #fff;
    appearance: none;
  }
  .family {
    width: 158px;
  }
  .size {
    width: 40px;
    margin-right: 1px;
    font-size: 13px;
  }
  .format {
    width: 131px;
  }
  .collapse {
    align-self: flex-end;
    margin: 0 3px 5px auto;
  }

  /* formula bar */
  .formula-bar {
    display: flex;
    flex: none;
    height: 28px;
    padding: 10px 0 10px 5px;
  }
  .name-box,
  .fx,
  .formula {
    display: flex;
    align-items: center;
    box-sizing: border-box;
    border: 1px solid #c6c6c6;
    background: #fdfdfd;
  }
  .name-box {
    width: 124px;
    padding: 0 5px 0 6px;
    font-size: 14px;
  }
  .name-box input,
  .formula input {
    flex: 1;
    min-width: 0;
    height: 24px;
    outline: 0;
  }
  .dots {
    width: 2px;
    height: 11px;
    align-self: center;
    background: repeating-linear-gradient(#aaa 0 2px, transparent 2px 5px);
  }
  .formula-bar .dots {
    margin: 0 14px;
  }
  .fx {
    width: 110px;
    margin-right: 3px;
  }
  .fx button {
    flex: 1;
  }
  .fn {
    font: italic 700 15px "Liberation Serif", serif;
  }
  .fn sub {
    font-size: 11px;
  }
  .formula {
    flex: 1;
    padding-right: 2px;
    border-right: 0;
  }

  /* worksheet */
  main {
    display: flex;
    flex: 1;
    gap: 3px;
    min-height: 0;
  }
  .sheet {
    position: relative;
    flex: 1;
    overflow: hidden;
    box-sizing: border-box;
    border-right: 1px solid #999;
    background: #fff;
  }
  table {
    width: 100%;
    table-layout: fixed;
    border-spacing: 0;
    color: #111;
    font-size: 17px;
    text-align: center;
  }
  .c-head {
    width: 26px;
  }
  .c-a {
    width: 192px;
  }
  .c-b {
    width: 248px;
  }
  .c-c {
    width: 305px;
  }
  .c-d {
    width: 259px;
  }
  .c-e {
    width: 242px;
  }
  .c-f {
    width: 189px;
  }
  td,
  th {
    box-sizing: border-box;
    padding: 0;
    border-right: 1px solid #d4d4d4;
    border-bottom: 1px solid #d4d4d4;
    white-space: nowrap;
  }
  thead th {
    height: 17px;
    padding-top: 2px;
    border-right-color: #b1b1b1;
    border-bottom: 2px solid #217346;
    background: #d2d2d2;
    color: #217346;
    font-size: 12px;
    font-weight: 400;
    line-height: 13px;
  }
  .corner {
    border-color: #b1b1b1;
    background: #e6e6e6;
  }
  .corner svg {
    margin: 1px 3px 0 auto;
  }
  tbody td {
    height: 32px;
    padding-top: 2px;
    line-height: 24px;
  }
  tbody th {
    border-right-color: #999;
    border-bottom-color: #b9b9b9;
    background: #e6e6e6;
    font-size: 13px;
    font-weight: 400;
    line-height: 13px;
    vertical-align: bottom;
  }
  th:last-child,
  td:last-child {
    border-right: 0;
  }
  td.name {
    padding: 0;
    font-family: "Noto Serif CJK SC", "Noto Sans CJK SC", serif;
    font-size: 19px;
  }
  .num {
    font-size: 16px;
  }
  .selected td {
    border-color: #a3a3a3;
    background: #c6c6c6;
  }
  .selected td.active {
    background: #fff;
  }
  .selected th {
    background: #d3f0e0;
    color: #217346;
  }
  .selection {
    position: absolute;
    top: 367px;
    left: 24px;
    right: 0;
    box-sizing: border-box;
    height: 163px;
    border: 2px solid #217346;
    border-right: 0;
    box-shadow: inset 1px 1px #fff, inset 0 -1px #fff;
  }
  .handle {
    position: absolute;
    left: -1px;
    bottom: -2px;
    width: 4px;
    height: 4px;
    border: solid #fff;
    border-width: 1px 1px 0 0;
    background: #217346;
  }
  .paste-options {
    position: absolute;
    top: 530px;
    left: 26px;
    width: 20px;
    height: 20px;
    border: 1px solid #ababab;
    background: #fff;
  }
  .pointer {
    position: absolute;
    top: 380px;
    left: 274px;
  }
  .pointing-arrow {
    position: absolute;
    top: 500px;
    left: 499px;
    filter: drop-shadow(3px 2px 2px rgba(0, 0, 0, 0.5));
  }
  .vscroll {
    display: flex;
    flex-direction: column;
    width: 11px;
    margin-top: 2px;
    background: #dadada;
    overflow: hidden;
  }
  .vscroll button,
  .vscroll .thumb {
    flex: none;
    box-sizing: border-box;
    width: 16px;
    height: 15px;
    border: 1px solid #ababab;
    background: #fff;
  }
  .vscroll .thumb {
    height: 151px;
  }
  .vscroll .end {
    margin-top: auto;
  }

  /* sheet tabs */
  .sheet-tabs {
    display: flex;
    flex: none;
    align-items: center;
    box-sizing: border-box;
    height: 29px;
    border-top: 1px solid #999;
    border-bottom: 1px solid #c0c0c0;
    font-size: 13px;
  }
  .arrows {
    display: flex;
    gap: 23px;
    width: 73px;
    padding-left: 27px;
  }
  .sheet-tabs ul {
    display: flex;
    align-self: flex-start;
    margin: 0;
    padding: 0;
    list-style: none;
  }
  li {
    display: flex;
    height: 23px;
  }
  li::after,
  li:first-child::before {
    content: "";
    width: 1px;
    height: 19px;
    margin-top: 3px;
    background: #999;
  }
  li button {
    height: 23px;
    padding: 0 12px 0 11px;
  }
  li.latin button {
    padding: 0 13px;
  }
  li.blue button,
  li.orange button {
    height: 22px;
    margin: 2px 2px 0;
    padding: 0 10px 2px;
    font-weight: 700;
    color: #111;
  }
  li.blue button {
    background: #bdd7ee;
  }
  li.orange button {
    padding: 0 9px 2px;
    background: #f4b084;
  }
  li.active button {
    height: 25px;
    margin-top: -1px;
    padding: 2px 12px 0 10px;
    border-left: 1px solid #999;
    border-bottom: 2px solid #217346;
    background: #fff;
    color: #217346;
  }
  li.active::after {
    content: none;
  }
  li.orange::after {
    background: none;
  }
  .add {
    margin-left: 33px;
  }
  .sheet-tabs .dots {
    margin-left: auto;
  }
  .hscroll {
    display: flex;
    width: 448px;
    height: 15px;
    margin: 0 14px 0 16px;
    background: #dadada;
  }
  .hscroll button,
  .hscroll .thumb {
    box-sizing: border-box;
    width: 15px;
    border: 1px solid #ababab;
    background: #fff;
  }
  .hscroll .thumb {
    width: 266px;
  }
  .hscroll .end {
    margin-left: auto;
  }

  /* status bar */
  footer {
    display: flex;
    flex: none;
    align-items: center;
    gap: 18px;
    height: 21px;
    padding: 0 20px 0 7px;
    background: #f1f1f1;
  }
  .views {
    display: flex;
    align-self: stretch;
    margin-left: auto;
  }
  .views button {
    width: 38px;
  }
  .zoom {
    display: flex;
    align-items: center;
    margin-left: -12px;
  }
  input[type="range"] {
    width: 103px;
    height: 14px;
    margin: 0 3px;
    appearance: none;
    background: linear-gradient(#999, #999) center / 100% 1px no-repeat, linear-gradient(#999, #999) center / 1px 6px no-repeat;
  }
  input[type="range"]::-webkit-slider-thumb {
    width: 4px;
    height: 11px;
    background: #555;
    appearance: none;
  }
  .level {
    margin-left: 15px;
  }

  .ime {
    position: absolute;
    bottom: 3px;
    left: 814px;
    display: flex;
    box-sizing: border-box;
    width: 211px;
    height: 25px;
    padding-left: 17px;
    border: 1px solid #b5cfec;
    border-radius: 2px;
    background: #fff;
  }
  .ime button {
    width: 24px;
  }
  .sogou {
    position: absolute;
    left: -17px;
    bottom: -3px;
  }
  .zh {
    color: #1a73d9;
    font-size: 15px;
    font-weight: 700;
  }

  .watermark {
    position: absolute;
    right: 10px;
    bottom: 7px;
    display: flex;
    opacity: 0.8;
    pointer-events: none;
  }
  .watermark div {
    display: flex;
    flex-direction: column;
  }
  .watermark strong {
    color: #3f7fc0;
    font-size: 21px;
    line-height: 20px;
  }
  .watermark em {
    color: #3fb36a;
    font: 700 16px/24px "Liberation Sans", sans-serif;
  }
</style>
